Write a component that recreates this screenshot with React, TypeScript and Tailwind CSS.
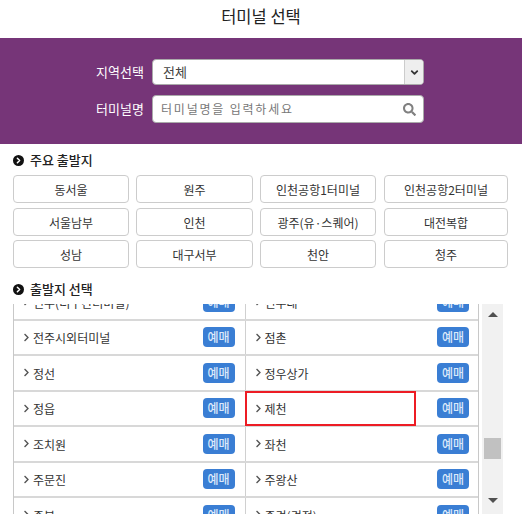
import React from "react";
import { ChevronDown, ChevronRight } from "lucide-react";
import { FaSearch, FaChevronRight } from "react-icons/fa";

const majors = [
  ["동서울", "원주", "인천공항1터미널", "인천공항2터미널"],
  ["서울남부", "인천", "광주(유·스퀘어)", "대전복합"],
  ["성남", "대구서부", "천안", "청주"],
];

const rows = [
  ["전주(더구간터미널)", "전주대"],
  ["전주시외터미널", "점촌"],
  ["정선", "정우상가"],
  ["정읍", "제천"],
  ["조치원", "좌천"],
  ["주문진", "주왕산"],
  ["중부", "중경(경전)"],
];

function SectionTitle({ label }: { label: string }) {
  return (
    <h2 className="flex items-center gap-[6px] text-[13px] font-medium leading-[20px] text-[#222]">
      <span className="flex h-[11px] w-[11px] items-center justify-center rounded-full bg-[#111]">
        <ChevronRight className="h-[9px] w-[9px] text-white" strokeWidth={4} />
      </span>
      {label}
    </h2>
  );
}

function Cell({ name, selected, last }: { name: string; selected?: boolean; last?: boolean }) {
  return (
    <div className={`relative flex h-full items-center justify-between ${last ? "w-[233px]" : "w-[232px] border-r border-[#d0d0d0]"}`}>
      <div className="flex items-center pl-[9px]">
        <FaChevronRight className="h-[9px] w-[7px] text-[#555]" />
        <span className="ml-[3px] pt-[2px] text-[12px] text-[#333]">{name}</span>
      </div>
      <button className={`h-[20px] w-[32px] rounded-[4px] bg-[#3a7ed4] text-[12px] font-medium leading-[20px] text-[#dbe9fa] ${last ? "mr-[9px]" : "mr-[10px]"}`}>
        예매
      </button>
      {selected && (
        <div className="absolute left-[-1px] top-[-1px] h-[35px] w-[171px] border-2 border-[#ed1c24]" />
      )}
    </div>
  );
}

export default function App() {
  return (
    <div className="h-[526px] w-[522px] overflow-hidden bg-white font-['Noto_Sans_CJK_KR','Noto_Sans',sans-serif] text-[#333]">
      <h1 className="h-[38px] text-center text-[16.5px] leading-[33px] text-[#222]">터미널 선택</h1>

      {/* 검색 영역 */}
      <div className="flex h-[106px] flex-col gap-[10px] bg-[#763578] pl-[96px] pt-[21px] text-[13px] text-white">
        <div className="flex items-center">
          <label className="w-[56px]">지역선택</label>
          <div className="flex h-[26px] w-[272px] overflow-hidden rounded-[4px] border border-[#aaa] bg-white">
            <span className="flex-1 pl-[10px] text-[13px] leading-[24px] text-[#444]">전체</span>
            <span className="flex w-[19px] items-center justify-center border-l border-[#ccc] bg-[#eee]">
              <ChevronDown className="h-[11px] w-[11px] text-[#333]" strokeWidth={4} />
            </span>
          </div>
        </div>
        <div className="flex items-center">
          <label className="w-[56px]">터미널명</label>
          <div className="flex h-[28px] w-[272px] items-center justify-between rounded-[4px] border border-[#aaa] bg-white pl-[8px] pr-[7px]">
            <span className="text-[12px] tracking-[1.8px] text-[#777]">터미널명을 입력하세요</span>
            <FaSearch className="h-[13px] w-[13px] text-[#808080]" />
          </div>
        </div>
      </div>

      {/* 주요 출발지 */}
      <div className="pl-[13px] pt-[6px]">
        <SectionTitle label="주요 출발지" />
        <div className="mt-[5px] flex w-[496px] flex-col gap-[4.5px]">
          {majors.map((row, i) => (
            <div key={i} className="grid grid-cols-[116px_117px_116px_125px] gap-x-[7px]">
              {row.map((m) => (
                <button key={m} className="h-[28px] rounded-[4px] border border-[#ccc] bg-white pt-[1px] text-[12px] leading-[25px] text-[#333] last:ml-[1px]">
                  {m}
                </button>
              ))}
            </div>
          ))}
        </div>
      </div>

      {/* 출발지 선택 */}
      <div className="pl-[13px] pt-[11px]">
        <SectionTitle label="출발지 선택" />
        <div className="mt-[5px] flex h-[210px] w-[490px]">
          <div className="h-full w-[466px] overflow-hidden border-x border-[#c8c8c8]">
            <div className="mt-[-19px]">
              {rows.map((r, i) => (
                <div key={i} className="flex h-[35.5px] border-b-2 border-[#d8d8d8]">
                  <Cell name={r[0]} />
                  <Cell name={r[1]} selected={r[1] === "제천"} last />
                </div>
              ))}
            </div>
          </div>
          {/* 스크롤바 */}
          <div className="ml-[3px] flex h-full w-[21px] flex-col items-center bg-[#f1f1f1]">
            <span className="mt-[8px] h-0 w-0 border-x-[5px] border-b-[5px] border-x-transparent border-b-[#505050]" />
            <span className="mt-[121px] h-[21px] w-[17px] bg-[#c1c1c1]" />
            <span className="mt-[39px] h-0 w-0 border-x-[5px] border-t-[5px] border-x-transparent border-t-[#505050]" />
          </div>
        </div>
      </div>
    </div>
  );
}
